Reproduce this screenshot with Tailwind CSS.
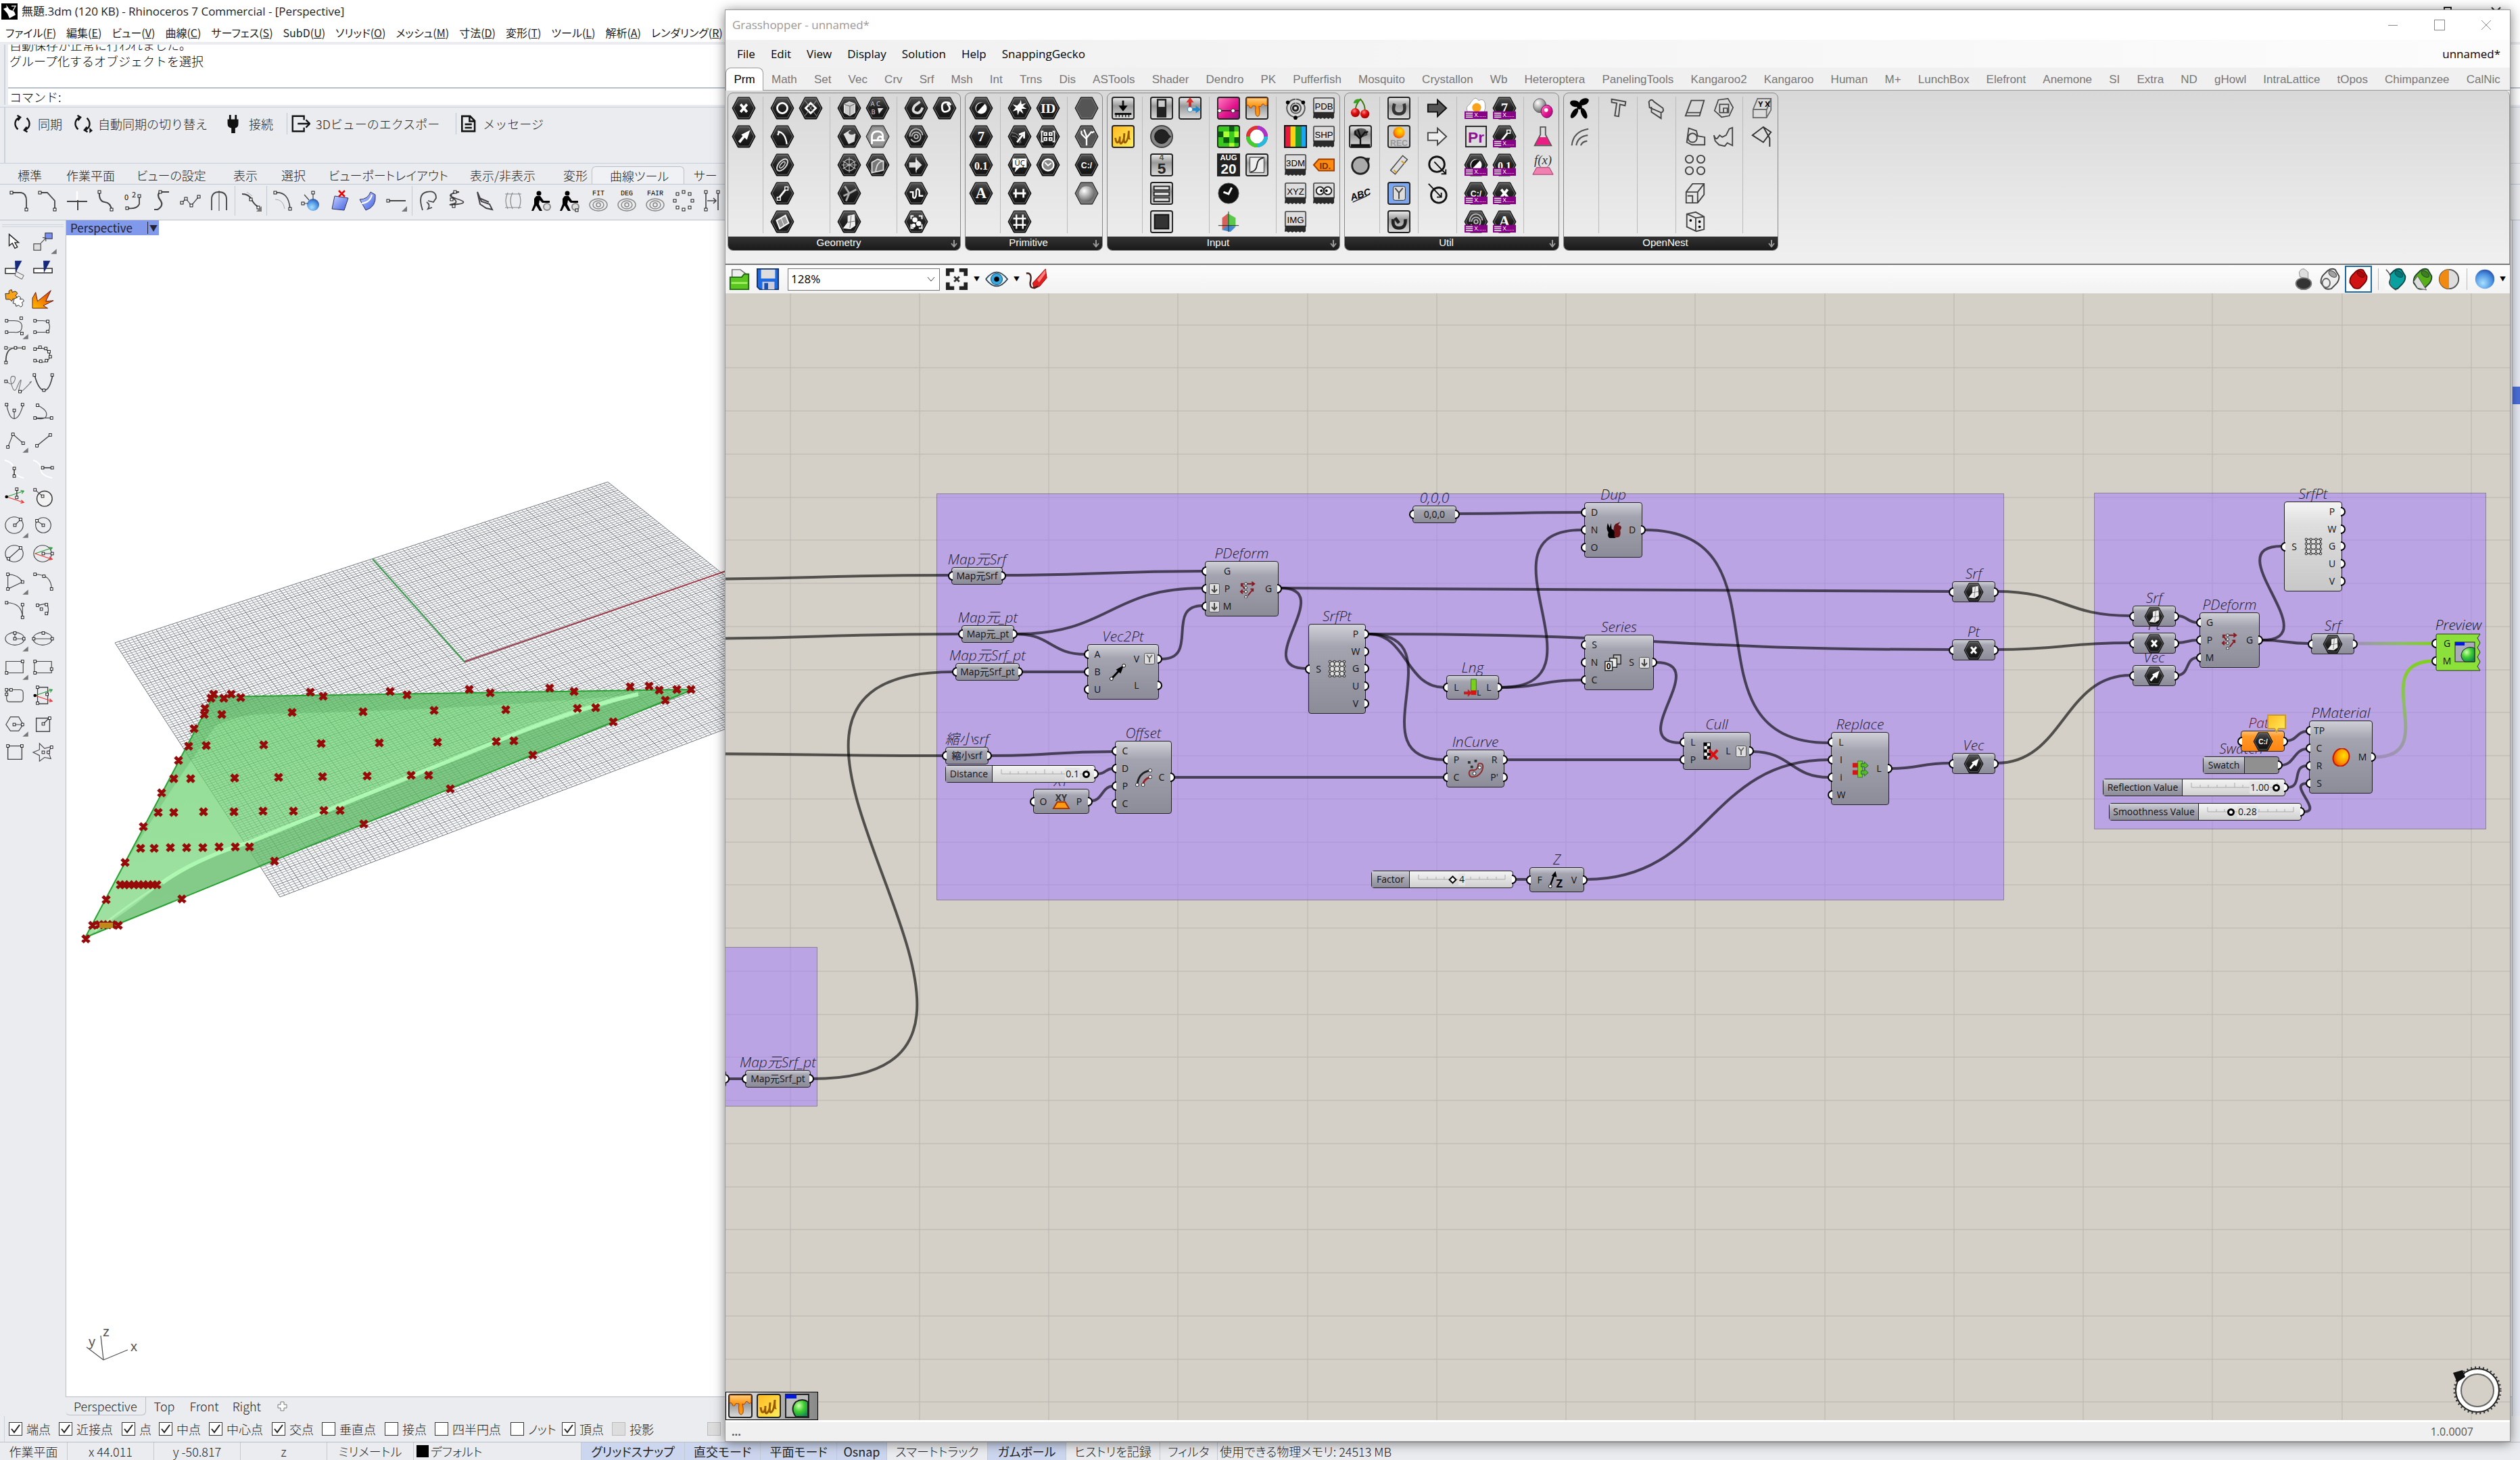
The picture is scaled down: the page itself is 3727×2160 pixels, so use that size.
<!DOCTYPE html>
<html lang="ja">
<head>
  <meta charset="UTF-8">
  <meta name="viewport" content="width=device-width, initial-scale=1.0">
  <title>Rhinoceros 7 - Grasshopper</title>
  <script src="https://cdn.jsdelivr.net/npm/@tailwindcss/browser@4"></script>
</head>
<body class="h-screen overflow-hidden bg-[#ebecef] font-['Noto_Sans_CJK_JP',sans-serif] text-[#222]">

  <!-- shared gradients -->
  <svg class="absolute w-0 h-0" aria-hidden="true">
    <defs>
      <linearGradient id="gHex" x1="0" y1="0" x2="0" y2="1"><stop offset="0" stop-color="#555"/><stop offset=".45" stop-color="#222"/><stop offset="1" stop-color="#111"/></linearGradient>
      <linearGradient id="gTile" x1="0" y1="0" x2="0" y2="1"><stop offset="0" stop-color="#eee"/><stop offset=".4" stop-color="#999"/><stop offset="1" stop-color="#ddd"/></linearGradient>
      <linearGradient id="gPink" x1="0" y1="0" x2="1" y2="1"><stop offset="0" stop-color="#ff80c0"/><stop offset=".6" stop-color="#e0108a"/><stop offset="1" stop-color="#901080"/></linearGradient>
      <linearGradient id="gOrange" x1="0" y1="0" x2="0" y2="1"><stop offset="0" stop-color="#ffd080"/><stop offset=".5" stop-color="#ff8a00"/><stop offset="1" stop-color="#f5a020"/></linearGradient>
      <linearGradient id="gYellow" x1="0" y1="0" x2="1" y2="1"><stop offset="0" stop-color="#ffb820"/><stop offset="1" stop-color="#fff060"/></linearGradient>
      <radialGradient id="gBall" cx=".35" cy=".3" r=".8"><stop offset="0" stop-color="#fff"/><stop offset=".6" stop-color="#999"/><stop offset="1" stop-color="#555"/></radialGradient>
      <radialGradient id="gBlue" cx=".4" cy=".7" r=".8"><stop offset="0" stop-color="#a8e0ff"/><stop offset=".6" stop-color="#4a90e0"/><stop offset="1" stop-color="#1c3c9c"/></radialGradient>
      <radialGradient id="gGreen" cx=".4" cy=".35" r=".7"><stop offset="0" stop-color="#d0ffb0"/><stop offset=".5" stop-color="#40d030"/><stop offset="1" stop-color="#108a50"/></radialGradient>
      <radialGradient id="gFire" cx=".6" cy=".35" r=".8"><stop offset="0" stop-color="#ffe000"/><stop offset=".5" stop-color="#ff9a00"/><stop offset="1" stop-color="#e02000"/></radialGradient>
      <radialGradient id="gRed" cx=".4" cy=".3" r=".8"><stop offset="0" stop-color="#ff8080"/><stop offset=".4" stop-color="#e01010"/><stop offset="1" stop-color="#800"/></radialGradient>
      <linearGradient id="gBurst" x1="0" y1="1" x2="1" y2="0"><stop offset="0" stop-color="#ffc000"/><stop offset="1" stop-color="#e03000"/></linearGradient>
      <linearGradient id="gSheet" x1="0" y1="0" x2="1" y2="1"><stop offset="0" stop-color="#c8d4ff"/><stop offset="1" stop-color="#4060e0"/></linearGradient>
    </defs>
  </svg>

  <!-- Rhino main window -->
  <div class="flex flex-col h-screen">
    <header class="bg-white shrink-0">
      <div class="flex items-center justify-between h-[34px] pl-[2px] pr-[28px]">
        <div class="flex items-center gap-[6px]">
          <svg class="w-[24px] h-[24px]" viewBox="0 0 24 24"><rect width="24" height="24" fill="#000"/><path d="M3 8L8 6L7 2L12 9L19 12L21 17L12 22L9 15Z" fill="#fff"/><path d="M15 4h6l-4 7" stroke="#ddd" stroke-width="1.500" fill="none"/></svg>
          <h1 class="text-[17px] leading-[24px] font-['Open_Sans','Noto_Sans_CJK_JP',sans-serif]">無題.3dm (120 KB) - Rhinoceros 7 Commercial - [Perspective]</h1>
        </div>
        <div class="flex gap-[58px]">
          <svg class="w-[15px] h-[15px]" viewBox="0 0 15 15" fill="none" stroke="#222" stroke-width="2"><path d="M1 5h9v9H1zM4 5V1h10v9h-4"/></svg>
          <svg class="w-[15px] h-[15px]" viewBox="0 0 15 15" fill="none" stroke="#222" stroke-width="2"><path d="M1 1L14 14M14 1L1 14"/></svg>
        </div>
      </div>
      <nav id="rhino-menu" class="flex items-center gap-[15px] h-[28px] pl-[8px] text-[16px] leading-[20px] whitespace-nowrap [font-feature-settings:'palt']"></nav>
    </header>

    <section class="shrink-0 mt-[4px] ml-[6px] pl-[4px] border-l-2 border-[#cdd3dc] text-[18px] leading-[24px] text-black font-light">
      <div class="flex flex-col justify-end h-[65px] bg-white overflow-hidden pl-[2px] pb-[27px] border-b-2 border-[#b8c0cc]">
        <p>自動保存が正常に行われました。</p>
        <p>グループ化するオブジェクトを選択</p>
      </div>
      <label class="flex items-center h-[24px] bg-white pl-[2px]">コマンド:<input type="text" class="flex-1 outline-none"></label>
    </section>

    <section class="shrink-0 mt-[3px] border-t border-[#c8cfdb] h-[83px]">
      <div class="flex items-start h-full ml-[6px] border-l-2 border-[#cdd3dc] pl-[10px] pt-[8px]">
        <div id="sync-bar" class="flex items-center h-[32px] text-[18px] leading-[24px] font-light"></div>
      </div>
    </section>

    <section class="shrink-0 border-t border-[#c8cfdb] h-[84px] pt-[4px]">
      <div id="rhino-tabs" class="flex items-end h-[27px] pl-[12px] border-b border-[#c0c8d4] text-[18px] leading-[26px] font-light whitespace-nowrap"></div>
      <div id="curve-tools" class="flex items-center h-[48px] pl-[9px]"></div>
    </section>

    <main class="flex flex-1 min-h-0 border-t border-[#b9c0c8]">
      <aside class="w-[97px] shrink-0 pt-[6px]">
        <div class="mx-[3px] h-[4px] border-y border-[#cdd3dc]"></div>
        <div id="toolbox" class="grid grid-cols-[42px_42px] auto-rows-[42px] pl-[1px]"></div>
      </aside>
      <div class="flex flex-col flex-1 min-w-0">
        <div class="relative flex-1 min-h-0 bg-white border-l border-b border-[#b9c0c8] overflow-hidden">
          <svg id="viewport" class="absolute left-0 top-0 w-[980px] h-[1740px]" viewBox="98 326 980 1740"></svg>
          <button class="absolute left-0 top-0 flex items-center h-[22px] w-[137px] pl-[6px] bg-[#8199ea] text-[17px] leading-[22px] text-[#223]">
            <span class="flex-1 text-left">Perspective</span><span class="border-l border-[#223] text-[12px] leading-[18px] w-[17px]">▼</span>
          </button>
        </div>
        <div class="flex items-start h-[28px] text-[18px] leading-[26px] font-light">
          <button class="px-[12px] h-[27px] border-b border-r border-[#b9c0c8] rounded-b-md">Perspective</button>
          <button class="px-[12px]">Top</button>
          <button class="px-[10px]">Front</button>
          <button class="px-[10px]">Right</button>
          <button class="px-[14px] h-[27px]" aria-label="add view"><svg class="w-[15px] h-[15px]" viewBox="0 0 15 15"><path d="M5 1h5v4h4v5h-4v4H5v-4H1V5h4z" fill="#fff" stroke="#777"/></svg></button>
        </div>
      </div>
      <aside class="w-[12px] shrink-0 bg-[#e6e9f2] border-l border-[#b9c0c8] pt-[246px]"><div class="h-[26px] bg-[#4b6fd8]"></div></aside>
    </main>

    <form id="osnap" class="flex items-center shrink-0 h-[38px] ml-[6px] pl-[6px] border-l border-[#cdd3dc] text-[18px] leading-[24px] font-light whitespace-nowrap"></form>

    <footer class="flex shrink-0 h-[27px] border-t border-[#b9c0c8] text-[18px] leading-[26px] font-light text-center whitespace-nowrap [font-feature-settings:'palt']">
      <div class="w-[100px] border-r border-[#c4cad4]">作業平面</div>
      <div class="w-[128px] border-r border-[#c4cad4]">x 44.011</div>
      <div class="w-[128px] border-r border-[#c4cad4]">y -50.817</div>
      <div class="w-[128px] border-r border-[#c4cad4]">z</div>
      <div class="w-[128px] border-r border-[#c4cad4]">ミリメートル</div>
      <div class="w-[248px] flex items-center gap-[3px] pl-[4px] border-r border-[#c4cad4]"><span class="w-[18px] h-[18px] bg-black"></span>デフォルト</div>
      <button class="w-[153px] border-r border-[#c4cad4] bg-[#ccd6ee] font-normal">グリッドスナップ</button>
      <button class="w-[112px] border-r border-[#c4cad4] bg-[#ccd6ee] font-normal">直交モード</button>
      <button class="w-[113px] border-r border-[#c4cad4] bg-[#ccd6ee] font-normal">平面モード</button>
      <button class="w-[74px] border-r border-[#c4cad4] bg-[#ccd6ee] font-normal">Osnap</button>
      <button class="w-[149px] border-r border-[#c4cad4]">スマートトラック</button>
      <button class="w-[116px] border-r border-[#c4cad4] bg-[#ccd6ee] font-normal">ガムボール</button>
      <button class="w-[139px] border-r border-[#c4cad4]">ヒストリを記録</button>
      <button class="w-[85px] border-r border-[#c4cad4]">フィルタ</button>
      <div class="pl-[3px]">使用できる物理メモリ: 24513 MB</div>
    </footer>
  </div>

  <!-- Grasshopper window -->
  <div class="absolute left-[1072px] right-[14px] top-[14px] bottom-[27px] flex flex-col bg-[#f0f0f0] border border-[#999] shadow-[0_2px_16px_rgba(0,0,0,0.5)] font-['Open_Sans','Noto_Sans_CJK_JP',sans-serif]">
    <div class="flex items-center justify-between shrink-0 h-[44px] bg-white pl-[10px] pr-[27px]">
      <h2 class="text-[17px] leading-[24px] text-[#999]">Grasshopper - unnamed*</h2>
      <div class="flex gap-[53px] text-[#888]">
        <button aria-label="minimize"><svg class="w-[16px] h-[16px]" viewBox="0 0 16 16" stroke="currentColor" fill="none"><path d="M1 8.500h14"/></svg></button>
        <button aria-label="maximize"><svg class="w-[16px] h-[16px]" viewBox="0 0 16 16" stroke="currentColor" fill="none"><rect x=".5" y=".5" width="15" height="15"/></svg></button>
        <button aria-label="close"><svg class="w-[16px] h-[16px]" viewBox="0 0 16 16" stroke="currentColor" fill="none"><path d="M1 1L15 15M15 1L1 15"/></svg></button>
      </div>
    </div>
    <div class="flex items-center justify-between shrink-0 h-[41px] bg-linear-to-r from-[#f0f0f0] to-[#fcfcfc] pl-[17px] pr-[14px] text-[17px] leading-[24px] text-black">
      <nav id="gh-menu" class="flex gap-[23px]"></nav>
      <span>unnamed*</span>
    </div>
    <div class="flex items-end shrink-0 h-[34px] border-b border-[#999] pr-[14px] text-[17px] leading-[30px] font-['Liberation_Sans',sans-serif] text-[#777]">
      <button class="w-[56px] h-[34px] -mb-px bg-white border border-[#999] border-b-0 rounded-t-lg text-black">Prm</button>
      <div id="gh-tabs" class="flex flex-1 justify-between pl-[12px]"></div>
    </div>
    <div id="ribbon" class="flex items-start gap-[6px] shrink-0 h-[256px] pl-[3px] pt-[3px] bg-linear-to-b from-[#d8d8d8] to-[#f0f0f0] border-r border-[#999] rounded-tr-lg"></div>
    <div class="flex items-center shrink-0 h-[44px] border-t-2 border-[#777] bg-linear-to-b from-[#fcfcfc] to-[#f2f2f2] pl-[4px] pr-[6px]">
      <div id="gh-left" class="flex items-center gap-[8px]"></div>
      <div id="gh-right" class="flex items-center gap-[5px] ml-auto"></div>
    </div>
    <div id="canvas" class="relative flex-1 min-h-0 overflow-hidden bg-[#d4d0c8] text-[#111]"></div>
    <div class="flex items-center justify-between shrink-0 h-[31px] border-t-3 border-white bg-[#f0f0f0] pl-[9px] pr-[54px] text-[16px] leading-[18px] text-[#555]">
      <span class="font-bold">...</span><span>1.0.0007</span>
    </div>
  </div>

  <script>
    const $ = (id) => document.getElementById(id);

    // ---------- Rhino menus ----------
    const rhinoMenu = [['ファイル','F'],['編集','E'],['ビュー','V'],['曲線','C'],['サーフェス','S'],['SubD','U'],['ソリッド','O'],['メッシュ','M'],['寸法','D'],['変形','T'],['ツール','L'],['解析','A'],['レンダリング','R']];
    $('rhino-menu').innerHTML = rhinoMenu.map(([t, k]) => `<button>${t}(<u>${k}</u>)</button>`).join('');

    const sync = '<path d="M9 25C2 18 4 9 12 6M8 3l5 3-4 5M23 7c7 7 5 16-3 19M24 29l-5-3 4-5" fill="none" stroke="#111" stroke-width="2.500"/>';
    const syncBar = [
      [sync, '同期', 'w-[89px]'],
      [sync + '<path d="M27 22v9l5-4z" fill="#111"/>', '自動同期の切り替え', 'w-[223px]'],
      ['<path d="M11 2v8M20 2v8" stroke="#111" stroke-width="3"/><path d="M7 9h17v7q0 6-5 7v8h-6v-8q-6-1-6-7z" fill="#111"/>', '接続', 'w-[94px]'],
      ['<path d="M22 10V4H4v24h18v-6M12 16h19M25 10l6 6-6 6" fill="none" stroke="#111" stroke-width="2.500"/>', '3Dビューのエクスポー', 'w-[250px]'],
      ['<path d="M5 3h14l8 8v18H5zM18 3v9h9M10 17h12M10 23h12" fill="none" stroke="#111" stroke-width="3"/>', 'メッセージ', 'w-[130px]'],
    ];
    $('sync-bar').innerHTML = syncBar.map(([s, t, w], i) => `<button class="flex items-center gap-[8px] h-full whitespace-nowrap ${w} ${i > 2 ? 'border-l border-[#c0c4cc] pl-[4px]' : ''}"><svg class="w-[30px] h-[30px]" viewBox="0 0 32 32">${s}</svg>${t}</button>`).join('');

    const tabs = [['標準', 'w-[72px]'], ['作業平面', 'w-[104px]'], ['ビューの設定', 'w-[143px]'], ['表示', 'w-[71px]'], ['選択', 'w-[70px]'], ['ビューポートレイアウト', 'w-[209px]'], ['表示/非表示', 'w-[138px]'], ['変形', 'w-[56px]'], ['曲線ツール', 'w-[137px]'], ['サー', 'w-[60px]']];
    $('rhino-tabs').innerHTML = tabs.map(([t, w], i) => `<button class="text-left ${w} ${i === 8 ? 'h-[26px] bg-[#f0f1f4] border border-b-0 border-[#b9c0c8] rounded-t-md pl-[26px]' : 'pl-[14px]'} [font-feature-settings:'palt']">${t}</button>`).join('');

    // ---------- Rhino tool icons (32 unit box, k = curve with control squares) ----------
    const sq = (x, y) => `<rect x="${x - 2}" y="${y - 2}" width="4" height="4" fill="#fff" stroke="#111"/>`;
    const k = (d, pts = '', w = 1.2, c = '#444') => `<path d="${d}" fill="none" stroke="${c}" stroke-width="${w}"/>` + (pts ? pts.split(' ').map(p => sq(...p.split(',').map(Number))).join('') : '');
    const spiral = (t) => `<text x="16" y="8" font-size="10" text-anchor="middle" font-family="Liberation Mono">${t}</text><g fill="none" stroke="#888" stroke-width="1.500"><circle cx="16" cy="22" r="3"/><ellipse cx="16" cy="22" rx="8" ry="6"/><ellipse cx="16" cy="22" rx="13" ry="9"/></g>`;
    const runner = '<circle cx="12" cy="5" r="3.500"/><path d="M8 9l6 0 5 7 9 0v3H17l-4-4-1 6 5 10h-4l-5-8-4 8H1l4-10 0-8z"/><circle cx="24" cy="25" r="5" fill="#ddd" stroke="#888" stroke-width="2"/>';
    const curveTools = [
      k('M3 4h14q8 1 8 12v13', '3,4 25,29', 1.8), k('M3 4h11l11 12v13', '3,4 25,29', 1.8), k('M16 2v28', '', 2.5, '#fff') + k('M1 17h30M17 15v15', '', 2),
      k('M7 3q-1 14 8 15t10 12', '7,3 25,29', 2), k('M24 9v12q-4 8-18 6', '24,9 6,27', 1.8) + '<text x="2" y="15" font-size="11">0</text><text x="13" y="11" font-size="11">2</text>',
      k('M26 3H13q-6 4 0 12t-4 14H4', '13,3', 2.2), k('M3 19l6-6 8 10 11-13', '3,19 9,13 17,23 28,10'), k('M5 30V14q0-11 11-11t11 11v16', '', 1.8) + k('M16 1v30', '', 1), '|',
      k('M3 6q10 0 14 8t10 11', '16,14 27,26', 1.8) + k('M10 3l8 6', '', 1, '#aaa') + '<path d="M32 24v8h-8z" fill="#777"/>', '|',
      k('M5 4q20-2 22 24', '5,4 27,28', 1.6) + k('M5 14q12 0 14 14', '', 1, '#aaa'),
      '<circle cx="19" cy="22" r="9" fill="url(#gBlue)"/>' + k('M19 14V3M12 20H3M13 15L6 7', '19,4 4,20'),
      '<path d="M9 9l20 3-6 18-18-2z" fill="url(#gSheet)" stroke="#336"/>' + k('M15 1l9 9M24 1l-9 9', '', 2.5, '#e00'),
      '<path d="M4 14q12 0 16-11l7 4q2 18-14 23z" fill="url(#gSheet)" stroke="#336"/>' + k('M7 20q13-2 15-13', '', 2, '#fff'),
      k('M4 16h26', '4,16', 2) + '<path d="M32 24v8h-8z" fill="#777"/>', '|',
      k('M8 30Q0 6 14 3t14 9l-4 6-8-2M14 18q6 4 2 10l6-2', '', 1.8), k('M14 3q-10 4-2 10t-2 8 8 0-2-8 4-10z', '14,3 9,14 12,24', 1.8),
      k('M5 3l6 14 12 4 4 8-9-2-9-6zM8 12l14 6', '', 2), k('M4 6h24M8 4q-6 12 0 24M15 4q-6 12 0 24M24 4q6 12 0 24M4 26h24', '', 1.2, '#888'),
      runner, runner + sq(26, 30), spiral('FIT'), spiral('DEG'), spiral('FAIR'),
      [[16, 3], [25, 6], [29, 16], [25, 26], [16, 29], [7, 26], [3, 16], [7, 6]].map(p => sq(...p)).join(''), k('M7 2v28M25 2v28M9 16h13M18 12l4 4-4 4', '7,3 7,29 25,3', 1.6),
    ];
    $('curve-tools').innerHTML = curveTools.map(s => s === '|' ? '<div class="w-px h-[44px] bg-[#c4c8d0] mx-[2px]"></div>' : `<button class="w-[42px] shrink-0 flex justify-center"><svg class="w-[32px] h-[32px] overflow-visible" viewBox="0 0 32 32">${s}</svg></button>`).join('');

    const m = '<path d="M38 29v8h-9z" fill="#777"/>'; // flyout corner
    const arrows = k('M4 17l27-9M26 7l5 1-3 4', '', 1.3, '#2a9a3a') + k('M4 17l27 9M27 22l4 4-5 1', '', 1.3, '#e33');
    const toolbox = [
      '<path d="M8 6v18l5-4 4 8 4-2-4-7h6z" fill="#fff" stroke="#222" stroke-width="1.500"/>',
      '<rect x="20" y="4" width="11" height="9" fill="#7a90f0" stroke="#222"/><rect x="2" y="21" width="11" height="10" fill="#ddd" stroke="#222"/>' + k('M13 20l8-8M16 11l5 1v5') + m,
      '<rect x="2" y="15" width="17" height="8" fill="#fff" stroke="#222" stroke-width="1.500"/><path d="M17 3h11L18 22z" fill="#14287c"/><path d="M19 20l12 6-3 6-11-6z" fill="#eee" stroke="#555"/>',
      '<rect x="2" y="15" width="29" height="7" fill="#fff" stroke="#222" stroke-width="1.500"/><path d="M17 3h11L18 22z" fill="#14287c"/>',
      '<path d="M2 10l6 0q-2-6 4-6l1 4q6-4 8 2l-3 3q4 2 0 7l-4-2-2 4-3-3-6 0z" fill="#f7a21b" stroke="#222"/><path d="M16 18l5-2q1-4 5 0l-1 3q6-2 6 3l-3 2q3 5-2 7l-3-3-4 2-1-4-4-1z" fill="#fff" stroke="#222"/>',
      '<path d="M0 33V17L5 8l3 14L29 5 21 22l12-1-16 8 7 4z" fill="url(#gBurst)" stroke="#511"/>',
      k('M4 8h12q13 0 12 10t-12 8H4', '4,8 4,26 27,4 28,28') + m, k('M4 8h12q11 0 11 9t-8 9H4', '4,8 4,26 24,9 24,25'),
      k('M3 29Q2 6 18 6h13', '', 1.8) + k('M3 6h28', '3,6 18,6 31,6 3,29', 1, '#999'), k('M4 8q10-4 18 1t4 14-22 3', '4,8 12,5 21,7 26,12 28,20 22,26 13,27 4,26'),
      k('M4 14q8 8 12 0t-2-8-2 14 8 4 6-12-2 12 10 0 6-8', '3,14 25,30', 1.2, '#777'), k('M3 3q6 24 15 25T32 3', '3,4 18,28 31,4', 1.8),
      k('M4 6q4 22 12 22T30 6M16 28V15', '4,6 29,6 16,15'), k('M8 7q16 8 14 16t-18 4h26', '8,7 4,27 30,27'),
      k('M6 28L14 8l16 14', '6,28 14,8 30,22') + m, k('M7 26L28 9', '7,26 28,9', 1.6),
      k('M1 4q14 4 14 14t16 14', '', 2, '#fff') + k('M16 17v12', '16,17 16,29', 1.8), k('M1 4q12 4 12 14t18 14', '', 2, '#fff') + k('M16 16h15', '16,16 31,16', 1.8),
      arrows + '<circle cx="4" cy="17" r="2.500"/>' + k('M20 5v13', '20,5 20,18', 1.6), '<circle cx="19" cy="20" r="12" fill="#f2f2f2" stroke="#333" stroke-width="1.500"/>' + k('M4 6l12 10', '4,6 16,16'),
      k('M2 17a14 13 0 1 0 28 0a14 13 0 1 0-28 0M17 17l9-9', '17,17 26,8') + m, k('M5 17a12 12 0 1 0 24 0a12 12 0 1 0-24 0M7 10l10 7', '7,10 17,17'),
      k('M2 17a14 13 0 1 0 28 0a14 13 0 1 0-28 0M7 25L26 8', '7,25 26,8'), k('M2 17a14 13 0 1 0 28 0a14 13 0 1 0-28 0M17 17h14', '17,17 31,17') + arrows,
      k('M6 5q16 0 23 12L6 28z', '6,5 6,28 29,17') + m, k('M4 5q26 0 26 23', '4,5 18,8 30,28'),
      k('M4 5q24 0 25 23V8', '4,5 29,8 29,28'), k('M8 10q14-6 16 0t0 12', '8,9 22,8 14,15 22,22'),
      k('M2 17a15 10 0 1 0 30 0a15 10 0 1 0-30 0M17 9v8h14', '17,8 17,17 31,17') + m, k('M1 17a15 10 0 1 0 30 0a15 10 0 1 0-30 0M2 17h29', '2,17 17,8 31,17'),
      k('M3 8h27v18H3z', '29,8 4,26') + m, k('M3 8h27v18H3z', '4,8 4,26 30,20'),
      k('M9 8h16q5 0 5 5v9q0 5-5 5H9q-5 0-5-5v-9q0-5 5-5', '4,8 11,8 4,15'), k('M8 4h16v26H8z', '8,4 8,29 23,15', 1.4) + arrows + '<circle cx="4" cy="17" r="2.500"/>',
      k('M10 6h13l7 12-7 10H10L3 18zM16 18h12', '16,18 29,18') + m, k('M6 8h21v21H6zM17 17l9-9', '17,17 27,8', 1.5),
      k('M6 7h22v21H6z', '6,7 28,7', 1.5), k('M1 17l10-4V3l8 8 11-3-5 9 4 10-10-2-8 6v-9z', '30,9 17,17 25,17'),
    ];
    $('toolbox').innerHTML = toolbox.map(s => `<button class="flex items-center justify-center"><svg class="w-[32px] h-[32px] overflow-visible" viewBox="0 0 34 34">${s}</svg></button>`).join('');

    // ---------- Perspective viewport ----------
    const L = [170, 951], T = [899, 713], R = [1265, 1006], B = [414, 1327];
    const mix = (a, b, t) => [a[0] + (b[0] - a[0]) * t, a[1] + (b[1] - a[1]) * t];
    let minor = '', major = '';
    for (let i = 0; i <= 120; i++) {
      const t = i / 120;
      const seg = `M${mix(L, T, t)}L${mix(B, R, t)}M${mix(L, B, t)}L${mix(T, R, t)}`;
      if (i % 5) minor += seg; else major += seg;
    }
    const marks = [[316,1027],[342,1027],[312,1033],[331,1033],[356,1032],[459,1024],[478,1030],[577,1023],[602,1028],[694,1020],[725,1025],[813,1018],[849,1023],[932,1016],[960,1015],[975,1021],[1001,1020],[1022,1020],[984,1036],
      [303,1048],[302,1057],[328,1057],[432,1054],[537,1053],[642,1051],[748,1050],[854,1048],[881,1047],[907,1068],[287,1078],[279,1104],[305,1103],[390,1102],[475,1100],[561,1099],[647,1098],[734,1097],[760,1096],[788,1117],
      [264,1125],[257,1152],[282,1152],[347,1151],[412,1150],[477,1149],[543,1148],[608,1147],[634,1147],[666,1167],[239,1173],[234,1202],[257,1202],[301,1201],[346,1201],[389,1200],[434,1200],[479,1199],[503,1199],[538,1219],
      [212,1223],[208,1255],[228,1255],[252,1254],[276,1254],[300,1254],[324,1253],[348,1253],[369,1253],[406,1274],[185,1276],[178,1309],[184,1309],[191,1309],[198,1309],[205,1309],[212,1309],[219,1309],[226,1309],[232,1309],
      [269,1330],[157,1331],[137,1369],[147,1368],[153,1368],[159,1368],[166,1368],[175,1369],[127,1389]];
    $('viewport').innerHTML = `
      <defs><linearGradient id="gSurf" x1="0" y1="0" x2=".3" y2="1"><stop offset="0" stop-color="#4fae5c"/><stop offset=".2" stop-color="#62d069"/><stop offset="1" stop-color="#7ad47c"/></linearGradient></defs>
      <path d="${minor}" stroke="#9599a1" stroke-width="1" fill="none"/>
      <path d="${major}" stroke="#70767f" stroke-width="1" fill="none"/>
      <path d="M551 827L687 979" stroke="#3a9a4a" stroke-width="2"/><path d="M687 979L1073 845" stroke="#a03a48" stroke-width="2"/>
      <path d="M315 1031L1025 1020L126 1387Z" fill="url(#gSurf)" fill-opacity=".7"/>
      <path d="M126 1387Q190 1350 237 1308T369 1246L737 1096L944 1027L1025 1020Z" fill="#3c8a48" fill-opacity=".25"/>
      <path d="M315 1031L126 1387Q200 1240 318 1075Q335 1058 400 1056Q700 1050 944 1027L1025 1020Z" fill="#3c8a48" fill-opacity=".2"/>
      <path d="M240 1306Q290 1270 369 1246L737 1096Q860 1045 944 1027" stroke="#b4ffb8" stroke-width="6" stroke-opacity=".85" fill="none"/>
      <path d="M140 1378Q180 1345 240 1306" stroke="#b4ffb8" stroke-width="3" stroke-opacity=".6" fill="none"/>
      <path d="M315 1031L1025 1020L126 1387Z" fill="none" stroke="#28a032" stroke-width="2"/>
      <path d="${marks.map(([x, y]) => `M${x - 5} ${y - 5}l10 10m0-10l-10 10`).join('')}" stroke="#960a0a" stroke-width="5" fill="none"/>
      <path d="M147 1369h20" stroke="#c08a18" stroke-width="8"/>
      <path d="M153 2012L149 1976M153 2012L189 1997M153 2012L128 1993" stroke="#555" stroke-width="1.300"/>
      <g font-size="20" fill="#555" font-family="Liberation Sans"><text x="152" y="1977">z</text><text x="131" y="1992">y</text><text x="193" y="1999">x</text></g>`;

    // ---------- Osnap ----------
    const snaps = [['端点', 1, 'w-[74px]'], ['近接点', 1, 'w-[93px]'], ['点', 1, 'w-[55px]'], ['中点', 1, 'w-[74px]'], ['中心点', 1, 'w-[93px]'], ['交点', 1, 'w-[74px]'], ['垂直点', 0, 'w-[93px]'], ['接点', 0, 'w-[74px]'], ['四半円点', 0, 'w-[112px]'], ['ノット', 0, 'w-[76px]'], ['頂点', 1, 'w-[74px]'], ['投影', 2, 'w-[141px]'], ['', 2, 'w-[24px]']];
    $('osnap').innerHTML = snaps.map(([t, on, w]) => `<label class="relative flex items-center shrink-0 gap-[6px] [font-feature-settings:'palt'] ${w}"><input type="checkbox" ${on === 1 ? 'checked' : ''} ${on === 2 ? 'disabled' : ''} class="peer appearance-none w-[20px] h-[20px] border border-[#333] bg-white disabled:bg-[#ddd] disabled:border-[#bbb]"><svg class="absolute left-[2px] w-[16px] h-[16px] hidden peer-checked:block" viewBox="0 0 16 16"><path d="M2 8l4 5 8-11" fill="none" stroke="#222" stroke-width="2"/></svg>${t}</label>`).join('');

    // ---------- Grasshopper menus ----------
    $('gh-menu').innerHTML = ['File', 'Edit', 'View', 'Display', 'Solution', 'Help', 'SnappingGecko'].map(t => `<button>${t}</button>`).join('');
    $('gh-tabs').innerHTML = ['Math', 'Set', 'Vec', 'Crv', 'Srf', 'Msh', 'Int', 'Trns', 'Dis', 'ASTools', 'Shader', 'Dendro', 'PK', 'Pufferfish', 'Mosquito', 'Crystallon', 'Wb', 'Heteroptera', 'PanelingTools', 'Kangaroo2', 'Kangaroo', 'Human', 'M+', 'LunchBox', 'Elefront', 'Anemone', 'SI', 'Extra', 'ND', 'gHowl', 'IntraLattice', 'tOpos', 'Chimpanzee', 'CalNic'].map(t => `<button>${t}</button>`).join('');

    // ---------- Ribbon icons (36 unit box) ----------
    const hex = (s, f = 'url(#gHex)') => `<polygon points="0,18 9,1 27,1 36,18 27,35 9,35" fill="${f}" stroke="#000"/><polygon points="2,18 10,3 26,3 34,18 26,33 10,33" fill="none" stroke="#777"/>${s}`;
    const ln = (d, w = 2.5, c = '#fff', f = 'none') => `<path d="${d}" fill="${f}" stroke="${c}" stroke-width="${w}"/>`;
    const tx = (t, s = 18, c = '#fff', y = 25, f = 'Liberation Serif') => `<text x="18" y="${y}" font-size="${s}" font-weight="bold" text-anchor="middle" fill="${c}" font-family="${f}">${t}</text>`;
    const tile = (s, f = 'url(#gTile)') => `<rect x="1" y="1" width="34" height="34" rx="3" fill="${f}" stroke="#222" stroke-width="2"/>${s}`;
    const chip = (t) => `<rect x="2" y="2" width="32" height="24" rx="2" fill="#ddd" stroke="#555" stroke-width="2"/><path d="M2 24h32v9l-3 2-3-2-3 2-3-2-3 2-3-2-3 2-3-2-3 2-3-2-3 1z" fill="#2a2a2a"/><text x="18" y="20" font-size="14" text-anchor="middle" font-family="Liberation Sans">${t}</text>`;
    const xm = (s) => s + '<rect x="0" y="23" width="36" height="12" fill="#860086"/><path d="M2 26h11M2 29h11M2 32h11" stroke="#fff" stroke-width="1.500"/><text x="15" y="32" font-size="9" fill="#fff" font-family="Liberation Sans">X.....</text>';
    const arrow = ln('M11 27L19 17', 4) + '<path d="M14 15l14-7-5 15z" fill="#fff"/>';
    const cross = ln('M13 12L23 24M23 12L13 24', 4);
    const srf = '<path d="M9 28L16 19 16 9 26 7 27 24 20 29z" fill="#eee" stroke="#fff"/>' + ln('M16 19l11-2M21 8l-2 20', 1, '#666');
    const swirl = '<g fill="none" stroke="#bbb" stroke-width="2"><circle cx="18" cy="18" r="3"/><path d="M11 18a7 7 0 0 1 14 0a8 8 0 0 1-15 4"/><path d="M8 18a10 11 0 0 1 20-2"/></g>';
    const tree = (c) => ln('M18 32V18M18 22l-8-8M18 20l8-10M18 18L14 7M10 14V9M26 12l4-2', 2.5, c);
    const I = {
      pt: hex(cross), vec: hex(arrow), circ: hex('<circle cx="18" cy="18" r="8" fill="none" stroke="#fff" stroke-width="3"/>'), quad: hex(ln('M18 10L26 18L18 26L10 18z', 3) + ln('M9 6l18 24M27 6L9 30', 1, '#aaa')),
      arc: hex(ln('M11 10q12 2 14 20M13 10L11 16')), ell: hex('<ellipse cx="18" cy="18" rx="11" ry="6" transform="rotate(-50 18 18)" fill="none" stroke="#ddd" stroke-width="2"/><ellipse cx="18" cy="18" rx="6" ry="2.500" transform="rotate(-50 18 18)" fill="none" stroke="#ddd" stroke-width="1.500"/>'),
      line: hex(ln('M12 26L24 11', 3) + ln('M10 24h5v5h-5zM22 8h5v5h-5z', 1.5, '#fff', '#222')), plane: hex(ln('M9 16l14-8 5 12-14 9z', 2, '#fff', '#999') + ln('M16 12l5 13', 1)),
      box: hex('<path d="M10 12l8-4 9 3v14l-8 5-9-5z" fill="#ccc" stroke="#fff"/>' + ln('M10 12l9 3 8-4M19 15v15', 1.2, '#666')), abc: hex('<text x="7" y="15" font-size="10" fill="#ddd">A C</text><text x="8" y="28" font-size="10" fill="#ddd">B</text><path d="M18 18h9l-7 9z" fill="#ddd"/>'),
      brep: hex('<path d="M9 14l10-6 9 6-2 12-9 4z" fill="#ddd"/><ellipse cx="22" cy="12" rx="5" ry="3" fill="#444"/>'), q: hex(ln('M9 30V19q0-9 9-9t8 9v5M9 24h20M18 24a4 6 0 1 1 8 0', 3), '#999'),
      mesh: hex('<circle cx="18" cy="18" r="9" fill="none" stroke="#aaa" stroke-width="1.500"/>' + ln('M18 6v24M8 12l20 12M28 12L8 24M6 18h24', 1.3, '#bbb')), srfm: hex(ln('M9 14l9-5 9 3v14l-7 2-11 2zM15 28q2-16 12-16', 2, '#ddd', '#777')),
      tri: hex(ln('M18 18L11 7M18 18l11-6M18 18l-5 12M18 18l-9 4', 3, '#aaa')), srf: hex(srf),
      mag: hex(ln('M24 8l-8 6q-6 8 1 11t11-8', 4, '#ddd')), sub: hex(ln('M26 10q-12-4-12 6t8 7 0-12M24 9l4 4', 3)), spi: hex(swirl), mir: hex('<path d="M7 14h10V8l10 10-10 10v-6H7z" fill="#ddd"/>' + ln('M18 6v24', 1)),
      loop: hex(ln('M8 16h5v8q4 4 5-4v-6q2-6 5 0v8h6')), grp: hex(ln('M10 14v-5h4M22 9h5v5M10 22v6h4M22 28h5v-6', 2) + '<circle cx="16" cy="15" r="4" fill="#fff"/><circle cx="22" cy="21" r="4" fill="#fff"/><circle cx="14" cy="24" r="3" fill="#fff"/>'),
      bool: hex('<circle cx="18" cy="18" r="9" fill="#fff"/><path d="M12 24A9 9 0 0 1 24 11z" fill="#111"/>'), n7: hex(tx('7', 22)), n01: hex(tx('0.1', 17)), A: hex(tx('A', 24)),
      splat: hex('<path d="M18 10l2-5 1 7 7-2-5 5 6 4-8 0 3 8-6-5-3 7-1-8-7 2 5-6-5-5 7 2z" fill="#fff"/>'), dom: hex(ln('M6 12q12 0 14 16M6 17q10 0 12 12', 1, '#999') + ln('M14 27l9-12M17 15l8-3v9', 3)), uc: hex('<path d="M7 8h22v14H18l-8 8 2-8H7z" fill="#fff"/><text x="10" y="19" font-size="12">ÜÇ</text>'),
      hh: hex(ln('M12 11v14M24 11v14M8 18h20', 3)), grid: hex(ln('M13 7v22M23 7v22M8 13h20M8 23h20', 2.5)), id: hex(tx('ID', 21)), mat: hex(ln('M11 10H8v16h3M25 10h3v16h-3', 2) + ln('M12 12h4v4h-4zM20 12h4v4h-4zM12 20h4v4h-4zM20 20h4v4h-4z', 2)), clk: hex('<circle cx="18" cy="18" r="9" fill="#888" stroke="#fff" stroke-width="2.500"/>' + ln('M13 14l5 5 5-4', 2)),
      gray: hex('', '#555'), treeh: hex(tree('#fff'), '#555'), cs: hex(tx('C:/', 13, '#fff', 23, 'Liberation Sans')), ball: hex('<circle cx="18" cy="19" r="12" fill="url(#gBall)"/>', '#777'),
      btn: tile(ln('M18 6v10', 3, '#111') + '<path d="M11 14h14l-7 9z"/>' + ln('M5 27h26', 3, '#111') + ln('M7 28v4M12 28v4M17 28v4M22 28v4M27 28v4', 1.5, '#111')), pan: tile(ln('M6 20q1 9 4 7t3-9q-1 14 3 10t4-15q-2 17 2 14t5-18q-1 14 2 12', 3, '#9a5a00'), 'url(#gYellow)'),
      tog: tile('<rect x="11" y="4" width="14" height="28" fill="#222" stroke="#111"/><rect x="13" y="6" width="10" height="10" fill="#ccc"/>'), knob: '<circle cx="18" cy="18" r="17" fill="#888" stroke="#444" stroke-width="2"/><circle cx="18" cy="18" r="11" fill="#222" stroke="#111"/><path d="M26 12l7 6-7 6z" fill="#222"/>',
      dig: tile(tx('4', 13, '#555', 11, 'Liberation Sans') + tx('5', 24, '#222', 32, 'Liberation Sans')), list: tile('<path d="M6 7h24v6H6zM6 16h24v6H6zM6 25h24v6H6z" fill="#ddd" stroke="#222" stroke-width="2"/>'), scr: tile('<rect x="7" y="7" width="22" height="22" fill="#333" stroke="#111" stroke-width="2"/>', '#ddd'),
      move: tile(ln('M18 20V6', 4, '#c22') + '<path d="M12 9l6-8 6 8z" fill="#d33"/>' + ln('M18 20h10', 4, '#28c') + '<path d="M27 14l8 6-8 6z" fill="#28c"/><circle cx="18" cy="20" r="4" fill="#fff" stroke="#28c"/>'),
      pink: tile(ln('M1 22h34', 1.5, '#222') + '<circle cx="4" cy="22" r="3" fill="#fff" stroke="#222"/><circle cx="25" cy="22" r="3" fill="#fff" stroke="#222"/>', 'url(#gPink)'), grn: tile('<path d="M2 10h8v9H2zM19 2h8v8h-8zM10 19h9v9h-9zM27 19h7v9h-7z" fill="#0a5a10"/><path d="M10 10h9v9h-9zM27 10h7v9h-7zM19 28h8v6h-8z" fill="#b0ff30"/>', '#3ac820'),
      cal: '<rect width="36" height="36" fill="#222"/>' + tx('AUG', 12, '#fff', 11, 'Liberation Sans') + tx('20', 22, '#fff', 32, 'Liberation Sans'), clock: '<circle cx="18" cy="18" r="16" fill="#111" stroke="#555"/>' + ln('M10 16l8 3 5-10', 3), cube: '<path d="M8 12l9-7v20l-9 6z" fill="#d8605a"/><path d="M17 5l12 7v14l-12-3z" fill="#5ac84a"/><path d="M8 31l9-8 12 3-8 8z" fill="#48c"/>' + ln('M2 24h32M18 2v32', 1, '#222'),
      drip: tile('<path d="M2 2h32v11q-3 3-5-1-3-2-4 2-1 3-4 1 2 8 1 13-3 6-6 0-1-8 0-13-6-2-6 2-3 3-4-2-2-3-4-1z" fill="url(#gOrange)" stroke="#a04000"/>'), wheel: '<circle cx="18" cy="18" r="14" fill="#fff" stroke="#d33" stroke-width="6"/><path d="M18 4A14 14 0 0 1 32 18" fill="none" stroke="#a3c" stroke-width="6"/><path d="M32 18A14 14 0 0 1 18 32" fill="none" stroke="#2bd" stroke-width="6"/><path d="M18 32A14 14 0 0 1 4 18" fill="none" stroke="#4c3" stroke-width="6"/>',
      graph: tile('<rect x="7" y="6" width="22" height="24" fill="#eee" stroke="#222"/>' + ln('M8 29q9-1 10-11t10-11', 2, '#222')), atom: ln('M18 4a14 14 0 1 0 1 0M18 10a8 8 0 1 0 1 0', 2, '#555') + '<circle cx="18" cy="18" r="4" fill="none" stroke="#222" stroke-width="3"/><circle cx="6" cy="9" r="3"/><circle cx="30" cy="9" r="3"/><circle cx="18" cy="33" r="3"/>',
      col: '<rect width="36" height="36" fill="#111"/><path d="M2 2h8v32H2z" fill="#e8183c"/><path d="M10 2h8v32h-8z" fill="#ffd010"/><path d="M18 2h9v32h-9z" fill="#1e9a2a"/><path d="M27 2h7v32h-7z" fill="#18a8f0"/>', dm: chip('3DM'), xyz: chip('XYZ'), img: chip('IMG'), pdb: chip('PDB'), shp: chip('SHP'), eyes: chip('') + '<g fill="#fff" stroke="#222" stroke-width="2"><circle cx="12" cy="14" r="6"/><circle cx="24" cy="14" r="6"/></g><circle cx="14" cy="14" r="2"/><circle cx="22" cy="14" r="2"/>',
      idt: '<path d="M2 18l8-9h24v18H10z" fill="#ff8a10" stroke="#a04000" stroke-width="2"/><text x="11" y="24" font-size="14" font-weight="bold" fill="#803000" font-family="Liberation Sans">ID.</text>',
      cherry: ln('M10 24Q10 12 18 4q8 8 7 20', 2, '#3a7a10') + '<path d="M17 4q-8-2-10 6 8 2 10-6" fill="#3aa020"/><circle cx="10" cy="25" r="7" fill="url(#gRed)"/><circle cx="25" cy="27" r="7" fill="url(#gRed)"/>', treet: tile('<path d="M8 16q-2-10 10-11t11 11l-11 4z" fill="#222" fill-opacity=".7"/>' + tree('#111') + ln('M3 32h30', 4, '#111')), lens: '<circle cx="18" cy="19" r="13" fill="#aaa" stroke="#222" stroke-width="3"/><path d="M23 7h10l-3 10z" fill="#222"/>', abcs: `<text x="2" y="25" font-size="15" font-weight="bold" font-style="italic" transform="rotate(-18 18 20)" font-family="Liberation Sans">ABC</text>` + ln('M6 32l22-10', 1.5, '#222'),
      ring: tile(ln('M11 11q-5 16 7 16t8-16', 5, '#333')), rec: tile(tx('REC', 13, '#999', 33, 'Liberation Sans') + '<circle cx="18" cy="12" r="9" fill="url(#gFire)"/>', '#ccc'), eraser: ln('M8 30L28 6', 11, '#444') + ln('M9 29L27 7', 8, '#ddd') + ln('M10 26l4 4M22 12l5 4', 2, '#d90'), zip: tile('<rect x="9" y="7" width="19" height="22" rx="3" fill="#ddd" stroke="#222"/>' + ln('M12 10l6 7 6-7M18 17v10', 2, '#444'), '#7ba6f0'), power: tile(ln('M9 14q-2 14 9 14t10-14M18 20l-6-8', 5, '#222')),
      ar1: '<path d="M3 12h15V5l14 13-14 13v-7H3z" fill="#555" stroke="#111" stroke-width="2"/>', ar2: '<path d="M3 12h15V5l14 13-14 13v-7H3z" fill="#eee" stroke="#444" stroke-width="2"/>', q1: '<circle cx="17" cy="17" r="12" fill="none" stroke="#111" stroke-width="3"/>' + ln('M13 13l18 19M31 25v7h-7', 2, '#111'), q2: '<circle cx="20" cy="21" r="12" fill="none" stroke="#111" stroke-width="3"/>' + ln('M4 3l20 21M24 17v7h-7', 2, '#111'),
      egg: xm('<path d="M8 12q2-4 6-8t8 2q8-4 10 4t-2 16H6Q0 16 8 12" fill="#fff" stroke="#999"/><circle cx="19" cy="17" r="7" fill="#f9a21b"/>'), pr: '<rect x="2" y="2" width="32" height="32" fill="#ddd" stroke="#222" stroke-width="2"/>' + tx('Pr', 24, '#8a1090', 28, 'Liberation Sans'),
      peb: '<ellipse cx="13" cy="14" rx="10" ry="11" fill="url(#gBall)" stroke="#555"/><ellipse cx="24" cy="23" rx="9" ry="10" fill="url(#gPink)" stroke="#606"/><circle cx="23" cy="21" r="3" fill="#fff"/>', flask: '<path d="M14 3h8v12l9 17H5l9-17z" fill="#ddd" stroke="#555" stroke-width="2"/><path d="M12 19h12l6 12H6z" fill="#e81e82"/>', fx: '<text x="18" y="17" font-size="20" font-style="italic" text-anchor="middle" fill="#333" font-family="Liberation Serif">f(x)</text><path d="M8 22h20l6 11H2z" fill="#f080b0" stroke="#a03060"/>',
      fan: '<g fill="#000"><ellipse cx="11" cy="11" rx="8" ry="5" transform="rotate(15 11 11)"/><ellipse cx="25" cy="8" rx="8" ry="5" transform="rotate(-25 25 8)"/><ellipse cx="10" cy="26" rx="9" ry="4" transform="rotate(-55 10 26)"/><ellipse cx="25" cy="26" rx="9" ry="4" transform="rotate(65 25 26)"/><circle cx="18" cy="16" r="4"/></g>', wifi: ln('M6 32Q8 10 32 6M13 32q2-14 18-16M20 32q2-6 10-7', 2.2, '#555'), T: ln('M8 4l22 4-1 6-8-2-2 19-6-1 3-20-8-1z', 2, '#444'), roll: ln('M6 8q4-6 8 0l14 10q2 6-3 7L7 17zM25 25v9L10 24v-8', 2, '#444'), par: ln('M12 6h20l-7 24H3zM6 25h20', 2, '#444'), hexs: ln('M10 5l15-2 8 14-6 13-12 2L4 22zM12 12h14v13H12zM18 18h6v7h-6z', 1.8, '#444'),
      shapes: ln('M8 5l12 4 2 8 11 2v12H13l-8-4z', 2, '#444') + '<circle cx="14" cy="20" r="7" fill="none" stroke="#444" stroke-width="2"/>', rhino: ln('M3 16q3 8 6 4l3-4 4 3 6-3 5-10 5-2v28l-8-4-4 5-9-2-6-6z', 2, '#444'), four: '<g fill="none" stroke="#444" stroke-width="2"><circle cx="9" cy="9" r="6"/><circle cx="27" cy="9" r="6"/><circle cx="9" cy="27" r="6"/><circle cx="27" cy="27" r="6"/></g>', boxd: ln('M4 16L14 3h18v17L22 33H4zM4 16h18v17M22 16L32 3M6 22h8v10', 2, '#444'), dice: ln('M5 6l14-3 13 7v20l-12 3L5 26zM5 6l14 6 13-2M19 12v20', 2, '#444') + '<circle cx="11" cy="16" r="2"/><circle cx="25" cy="18" r="2"/><circle cx="25" cy="26" r="2"/>',
      yx: ln('M11 3h21l-7 18v12H4V20zM4 20h21M25 33l7-12V3', 1.8, '#666') + '<text x="12" y="16" font-size="12" font-weight="bold">Y X</text>', sign: ln('M3 16L20 3l12 8-12 16zM20 3l10 18v13', 2, '#333'),
    };
    const X = (key) => xm(I[key]);
    Object.assign(I, { x7: X('n7'), xl: X('line'), xb: X('bool'), x01: X('n01'), xc: X('cs'), xp: X('pt'), xs: X('spi'), xA: X('A') });

    // panel -> groups (separated by a rule) -> columns of icons
    const panels = [
      ['Geometry', [['pt vec'], ['circ arc ell line plane', 'quad'], ['box brep mesh tri srf', 'abc q srfm'], ['mag spi mir loop grp', 'sub']]],
      ['Primitive', [['bool n7 n01 A'], ['splat dom uc hh grid', 'id mat clk'], ['gray treeh cs ball']]],
      ['Input', [['btn pan'], ['tog knob dig list scr', 'move'], ['pink grn cal clock cube', 'drip wheel graph'], ['atom col dm xyz img', 'pdb shp idt eyes']]],
      ['Util', [['cherry treet lens abcs'], ['ring rec eraser zip power'], ['ar1 ar2 q1 q2'], ['egg pr xb xc xs', 'x7 xl x01 xp xA'], ['peb flask fx']]],
      ['OpenNest', [['fan wifi'], ['T'], ['roll'], ['par shapes four boxd dice', 'hexs rhino'], ['yx sign']]],
    ];
    $('ribbon').innerHTML = panels.map(([name, groups]) => `
      <section class="flex flex-col h-[234px] border border-[#888] rounded-lg overflow-hidden">
        <div class="flex flex-1 py-[5px] px-[5px]">
          ${groups.map(cols => `<div class="flex gap-[6px] px-[10px] first:pl-0 last:pr-0 border-r border-[#bbb] last:border-r-0">${cols.map(c => `<div class="flex flex-col gap-[8px]">${c.split(' ').map(id => `<button class="w-[36px] h-[34px]"><svg class="w-[36px] h-[34px]" viewBox="0 0 36 36">${I[id]}</svg></button>`).join('')}</div>`).join('')}</div>`).join('')}
        </div>
        <div class="relative h-[20px] pr-[16px] bg-linear-to-b from-[#333] to-[#1a1a1a] text-white text-center text-[15px] leading-[18px] font-['Liberation_Sans',sans-serif]">${name}<svg class="absolute right-[3px] top-[4px] w-[11px] h-[12px]" viewBox="0 0 11 12"><path d="M5 1v10M1 6l4 5 4-5" stroke="#999" stroke-width="2" fill="none"/></svg></div>
      </section>`).join('');

    // ---------- Canvas toolbar ----------
    const ic = (s) => `<button class="w-[34px] h-[36px]"><svg class="w-[34px] h-[36px]" viewBox="0 0 36 36">${s}</svg></button>`;
    const drop = '<span class="w-[9px] text-[9px] leading-[12px] text-black">▼</span>';
    const rule = '<span class="w-px h-[32px] mx-[4px] bg-[#bbb]"></span>';
    $('gh-left').innerHTML =
      ic('<path d="M6 16V3h13l9 7v6z" fill="#eee" stroke="#666" stroke-width="1.500"/><path d="M3 15h18l4-5h7v24H3z" fill="#5ac420" stroke="#1e6a10" stroke-width="2"/><path d="M5 24h25" stroke="#a0f060" stroke-width="3"/>') +
      ic('<path d="M1 2h33v32H5l-4-4z" fill="#1e6ae0" stroke="#103070" stroke-width="2"/><rect x="7" y="3" width="22" height="14" fill="#ddd"/><rect x="9" y="22" width="19" height="12" fill="#ccd"/><rect x="12" y="24" width="6" height="10" fill="#1450b0"/>') +
      `<label class="relative flex items-center w-[225px] h-[33px] ml-[4px]"><select aria-label="zoom" class="appearance-none w-full h-full pl-[4px] bg-white border border-[#777] text-[17px] leading-[20px] text-black"><option>128%</option></select><svg class="absolute right-[7px] w-[12px] h-[8px]" viewBox="0 0 12 8"><path d="M1 1l5 6 5-6" fill="none" stroke="#444"/></svg></label>` +
      ic(ln('M4 13V4h10M22 4h10v9M32 23v9H22M14 32H4v-9', 6, '#222') + ln('M14 14l8 8M22 14l-8 8', 3, '#333')) + drop +
      ic('<path d="M1 18Q18-4 35 18Q18 40 1 18" fill="#e8f4fa" stroke="#345" stroke-width="2"/><circle cx="18" cy="18" r="9" fill="#38a8e0" stroke="#146"/><circle cx="18" cy="18" r="4"/>') + drop +
      ic('<path d="M12 24L32 2l2 14-11 13-9 4z" fill="#e02020" stroke="#900"/><path d="M19 19L32 3l0 6-10 14z" fill="#ff8080"/>' + ln('M2 9q10-2 6 15 0 12 12 5', 2.5, '#422'));
    const gem = (c, s) => `<path d="M14 5Q20 0 26 3L32 13Q33 20 27 26L20 33Q12 35 9 31L4 24Q3 16 8 11z" fill="${c}" stroke="${s}" stroke-width="2"/><ellipse cx="22" cy="10" rx="7" ry="4" transform="rotate(35 22 10)" fill="${s}" fill-opacity=".45" stroke="${s}"/>`;
    $('gh-right').innerHTML =
      ic('<path d="M12 14L11 7q3-6 8-5l6 5v12z" fill="#ddd" stroke="#888"/><ellipse cx="18" cy="25" rx="12" ry="9" fill="#333" stroke="#777" stroke-width="2"/>') + ic(gem('#eee', '#444') + '<ellipse cx="12" cy="24" rx="6" ry="7" fill="none" stroke="#666" stroke-width="2"/>') +
      `<button class="w-[40px] h-[40px] flex items-center justify-center border-2 border-[#1a6aa0] bg-white"><svg class="w-[32px] h-[34px]" viewBox="0 0 36 36">${gem('#d01414', '#700')}</svg></button>${rule}` +
      ic(gem('#0aa0a0', '#044') + '<path d="M2 3q10 10 6 17t8 15H0z" fill="#f8f8f8"/>' + ln('M2 3q10 10 6 17t10 15', 1.5, '#444')) + ic(gem('#58b018', '#243') + '<path d="M4 22l6-9 14 22-14-3z" fill="#ddd" stroke="#555"/>') + ic('<circle cx="18" cy="18" r="15" fill="#ddd" stroke="#555" stroke-width="2"/><path d="M18 3a15 15 0 0 0 0 30z" fill="#f08a10"/>') + rule +
      ic('<circle cx="18" cy="18" r="15" fill="url(#gBlue)"/>') + drop;

    // ---------- Canvas ----------
    // node data is kept in window coordinates; the canvas starts at OX, OY
    const OX = 1073, OY = 434;
    let lines = '';
    for (let i = 0; i < 15; i++) lines += `M${Math.round(1168.5 + i * 191.25)} 434V2110`;
    for (let i = 0; i < 27; i++) lines += `M1073 ${Math.round(480.5 + i * 63.75)}H3720`;

    const wires = [[1000,857,1404,851],[1000,945,1419,938],[1000,1115,1395,1118],[1000,1596,1099,1596],[1201,1596,1410,994],[1486,851,1779,845],[1503,938,1779,870],[1503,938,1605,968],[1511,994,1605,994],[1718,975,1779,896],[1894,870,1932,989],[1894,870,2884,875],[1465,1118,1646,1112],[1624,1145,1646,1137],[1614,1185,1646,1163],[1737,1150,2136,1150],
      [2024,938,2136,1017],[2024,938,2136,1124],[2024,938,2884,961],[2156,760,2340,758],[2220,1017,2340,784],[2220,1017,2340,1006],[2449,980,2486,1099],[2228,1124,2486,1124],[2432,784,2705,1099],[2592,1112,2705,1150],[2241,1301,2259,1301],[2347,1301,2705,1124],[2796,1137,2884,1129],
      [2953,875,3151,911],[2953,961,3151,951],[2953,1129,3151,999],[3220,911,3250,921],[3220,951,3250,947],[3220,999,3250,973],[3345,947,3375,808],[3345,947,3415,952],[3382,1096,3412,1082],[3374,1132,3412,1108],[3383,1165,3412,1133],[3407,1201,3412,1159]];
    const bez = ([a, b, c, d]) => { const t = Math.max(Math.abs(c - a) / 2, Math.abs(d - b) * 0.72); return `M${a} ${b}C${a + t} ${b} ${c - t} ${d} ${c} ${d}`; };

    const nIcon = {
      deform: '<g stroke="#8a1a20" stroke-width="2" fill="none"><path d="M9 14L4 6M4 10V6h4M13 6h11M20 3l4 3-4 3M12 18H3M6 15l-3 3 3 3M14 24l8-10M18 14h4v4"/></g>' + [[11, 6], [11, 12], [11, 18], [11, 26]].map(([x, y]) => `<circle cx="${x}" cy="${y}" r="2" fill="#fff" stroke="#222"/>`).join(''),
      arrow: '<path d="M5 24L18 10" stroke="#000" stroke-width="3"/><path d="M12 10l12-7-5 13z"/><circle cx="5" cy="24" r="2.500" fill="#fff" stroke="#000"/><circle cx="24" cy="4" r="2.500" fill="#fff" stroke="#000"/>',
      grid: '<rect x="3" y="3" width="22" height="22" fill="#ddd"/><path d="M3 3h22v22H3zM3 10h22M3 18h22M10 3v22M18 3v22" fill="none" stroke="#333" stroke-width="1.500"/>' + [3, 10, 18, 25].map(x => [3, 10, 18, 25].map(y => `<circle cx="${x}" cy="${y}" r="1.800" fill="#ccc" stroke="#222"/>`).join('')).join(''),
      offset: '<path d="M4 25Q6 6 24 3" stroke="#222" stroke-width="3" fill="none"/><path d="M13 25q1-9 11-12" stroke="#9a2020" stroke-width="3" fill="none"/>' + [[4, 25], [24, 3], [13, 25], [24, 13]].map(([x, y]) => `<circle cx="${x}" cy="${y}" r="2.500" fill="#fff" stroke="#222"/>`).join(''),
      xy: '<text x="14" y="13" font-size="14" font-weight="bold" text-anchor="middle" fill="#333">XY</text><path d="M8 15h12l6 10H2z" fill="#ff9a10" stroke="#a03000" stroke-width="2"/>',
      rabbit: '<path d="M14 12q0-8 6-9l4-2-3 5q8 2 3 8 2 10-4 11h-8z" fill="#6a1418"/><path d="M5 3l3 7 2-7 1 9q5 2 4 8t4 6H8q-4-2-2-9-4-5-1-14"/>',
      series: '<g fill="#eee" stroke="#222" stroke-width="1.500"><rect x="15" y="2" width="11" height="14" fill="#bbb"/><rect x="9" y="7" width="11" height="14"/><rect x="2" y="12" width="11" height="14"/></g><text x="4" y="24" font-size="12" font-weight="bold">0</text>',
      lng: '<rect x="11" y="1" width="8" height="20" fill="#7ad01a" stroke="#374"/><rect x="11" y="18" width="8" height="7" fill="#d01818"/><path d="M0 20h6v-4l6 6-6 6v-4H0z" fill="#d01818"/><text x="20" y="26" font-size="12">L</text>',
      incurve: '<path d="M18 6q8-2 7 6t-9 13q-11 4-12-3t6-6 8-10" fill="none" stroke="#8a2a2a" stroke-width="2"/><circle cx="20" cy="12" r="2.500" fill="#fff" stroke="#222"/><circle cx="12" cy="21" r="2.500" fill="#fff" stroke="#222"/><path d="M2 2h4v4H2zM12 0h4v4h-4zM6 9h4v4H6z" fill="#333"/>',
      cull: '<rect x="3" y="1" width="10" height="25" fill="#fff" stroke="#000"/><path d="M3 1h5v5H3zM8 6h5v5H8zM3 11h5v5H3zM8 16h5v5H8zM3 21h5v5H3z"/><path d="M11 12l13 14M24 12L11 26" stroke="#d81010" stroke-width="4"/>',
      replace: '<rect x="10" y="2" width="7" height="25" fill="#7ad01a" stroke="#374"/><path d="M2 5h8v7H2zM2 16h8v7H2z" fill="#d01818"/><path d="M15 6h5V3l6 6-6 5v-3h-5zM15 17h5v-3l6 6-6 5v-3h-5z" fill="#58b828" stroke="#263"/>',
      z: '<path d="M4 23L10 6" stroke="#000" stroke-width="2.500"/><path d="M6 8l6-7 2 9z"/><circle cx="4" cy="24" r="2.500" fill="#fff" stroke="#000"/><text x="13" y="26" font-size="17" font-weight="bold">Z</text>',
      egg: '<ellipse cx="14" cy="14" rx="12" ry="14" transform="rotate(25 14 14)" fill="url(#gFire)" stroke="#c01800" stroke-width="2"/>',
    };
    const badge = (c) => c === '>' ? '<svg class="w-[16px] h-[17px]" viewBox="0 0 16 17"><rect x=".5" y=".5" width="15" height="16" rx="2" fill="#ddd" stroke="#555"/><path d="M8 3v10M4 9l4 4 4-4" fill="none" stroke="#444" stroke-width="2"/></svg>'
      : c === '#' ? '<svg class="w-[16px] h-[17px]" viewBox="0 0 16 17"><rect x=".5" y=".5" width="15" height="16" rx="2" fill="#ddd" stroke="#555"/><path d="M4 3l4 5 4-5M8 8v6" fill="none" stroke="#666" stroke-width="2"/></svg>' : '<span class="w-[16px]"></span>';
    const gripL = '<span class="absolute -left-[6px] top-1/2 -mt-[7px] w-[7px] h-[14px] bg-white border-2 border-r-0 border-black rounded-l-full"></span>';
    const gripR = '<span class="absolute -right-[6px] top-1/2 -mt-[7px] w-[7px] h-[14px] bg-white border-2 border-l-0 border-black rounded-r-full"></span>';
    const title = (t, c = 'text-[#221c2c]') => `<span class="absolute bottom-full left-1/2 -translate-x-1/2 italic text-[21px] leading-[26px] font-light whitespace-nowrap ${c}">${t}</span>`;
    const at = (x, y, w, h) => `style="left:${x - OX}px;top:${y - OY}px;width:${w}px;height:${h}px"`;
    const skin = { grey: 'bg-linear-to-b from-[#d0d0d8] via-[#a4a4b0] via-25% to-[#8c8c99]', light: 'bg-linear-to-b from-[#f4f4f4] via-[#dedede] via-25% to-[#c8c8c8]', orange: 'bg-linear-to-b from-[#ffc070] via-[#ff9a28] via-25% to-[#ff8410]' };

    function node(x, y, w, h, name, ins, outs, icon, look = 'grey') {
      const col = (list, left) => {
        const wide = list.some(s => /[>#]/.test(s));
        return `<div class="flex flex-col h-full py-[1px]">${list.map(s => {
          const b = wide ? badge(s.slice(-1)) : '', t = `<span class="min-w-[18px] text-center">${s.replace(/[>#]/, '')}</span>`;
          return `<div class="relative flex flex-1 items-center gap-[2px] px-[5px]">${left ? gripL + b + t : t + b + gripR}</div>`;
        }).join('')}</div>`;
      };
      return `<div class="absolute flex items-center justify-between border border-[#222] rounded-sm text-[14px] leading-[18px] ${skin[look]}" ${at(x, y, w, h)}>${title(name)}${col(ins, true)}<svg class="w-[27px] h-[27px] shrink-0 -mx-[4px]" viewBox="0 0 28 28">${nIcon[icon]}</svg>${col(outs, false)}</div>`;
    }
    const param = (x, y, w, h, name, body, look = 'grey', tc) => `<div class="absolute border border-[#222] rounded-sm flex items-center justify-center text-[14px] leading-[18px] whitespace-nowrap ${skin[look]}" ${at(x, y, w, h)}>${title(name, tc)}${gripL}${I[body] ? `<svg class="w-[30px] h-[28px]" viewBox="0 0 36 36">${I[body]}</svg>` : body}${gripR}</div>`;

    function slider(x, y, w, label, lw, pct, text, side, shape) {
      const tw = w - lw, knob = 13 + pct / 100 * (tw - 26);
      const ticks = Array.from({ length: 11 }, (_, i) => `M${Math.round(13 + i * (tw - 26) / 10)} 12v${i % 5 ? -4 : -7}`).join('');
      const pos = side === 'left' ? `right:${Math.round(tw - knob + 9)}px` : `left:${Math.round(knob + 8)}px`;
      return `<div class="absolute flex border border-[#222] rounded-sm text-[14px] leading-[18px] bg-linear-to-b from-[#f4f4f4] to-[#cfcfcf]" ${at(x, y, w, 26)}>
        ${gripR}
        <label for="s-${label.split(' ')[0]}" class="flex items-center justify-center shrink-0 border-r border-[#222] whitespace-nowrap bg-linear-to-b from-[#d0d0d8] via-[#a4a4b0] to-[#8c8c99]" style="width:${lw}px">${label}</label>
        <div class="relative flex-1 min-w-0 flex items-center px-[7px]">
          <svg class="absolute left-0 top-0 w-full h-full"><path d="M13 12H${tw - 13}${ticks}" stroke="#aaa" fill="none"/></svg>
          <span class="absolute bg-[#e4e4e4] px-[1px]" style="${pos}">${text}</span>
          <input id="s-${label.split(' ')[0]}" type="range" min="0" max="100" value="${pct}" class="relative appearance-none w-full bg-transparent [&::-webkit-slider-thumb]:appearance-none [&::-webkit-slider-thumb]:bg-white [&::-webkit-slider-thumb]:border-black ${shape === 'diamond' ? '[&::-webkit-slider-thumb]:border-2 [&::-webkit-slider-thumb]:rotate-45 [&::-webkit-slider-thumb]:w-[9px] [&::-webkit-slider-thumb]:h-[9px]' : '[&::-webkit-slider-thumb]:border-3 [&::-webkit-slider-thumb]:rounded-full [&::-webkit-slider-thumb]:w-[11px] [&::-webkit-slider-thumb]:h-[11px]'}">
        </div></div>`;
    }

    $('canvas').innerHTML = `
      <svg class="absolute left-0 top-0 w-full h-full"><g transform="translate(-1073 -434)">
        <defs><linearGradient id="w1" gradientUnits="userSpaceOnUse" x1="3485" y1="0" x2="3600" y2="0"><stop offset="0" stop-color="#a090b8"/><stop offset=".6" stop-color="#8cc060"/><stop offset="1" stop-color="#80d020"/></linearGradient>
        <linearGradient id="w2" gradientUnits="userSpaceOnUse" x1="0" y1="1120" x2="0" y2="978"><stop offset="0" stop-color="#a090b8"/><stop offset=".6" stop-color="#8cc060"/><stop offset="1" stop-color="#80d020"/></linearGradient></defs>
        <path d="${lines}" stroke="#b9b5ae" fill="none"/>
        <g fill="#a078ff" fill-opacity=".5" stroke="#000" stroke-opacity=".3"><rect x="1385.500" y="730.500" width="1578" height="601"/><rect x="3097.500" y="729.500" width="579" height="497"/><rect x="1060.500" y="1401.500" width="148" height="235"/></g>
        <g fill="none" stroke="#000" stroke-opacity=".62" stroke-width="4">${wires.map(w => `<path d="${bez(w)}"/>`).join('')}</g>
        <path d="${bez([3485, 952, 3600, 952.1])}" fill="none" stroke="url(#w1)" stroke-width="5"/>
        <path d="${bez([3512, 1120, 3600, 978])}" fill="none" stroke="url(#w2)" stroke-width="5"/>
      </g></svg>` +
      param(1010, 1583, 64, 26, '', '') + param(1102, 1583, 97, 26, 'Map元Srf_pt', 'Map元Srf_pt') +
      param(1407, 839, 76, 26, 'Map元Srf', 'Map元Srf') + param(1422, 925, 78, 26, 'Map元_pt', 'Map元_pt') + param(1413, 981, 95, 26, 'Map元Srf_pt', 'Map元Srf_pt') + param(1398, 1105, 64, 26, '縮小srf', '縮小srf') +
      node(1528, 1167, 83, 37, 'XY', ['O'], ['P'], 'xy') + slider(1398, 1132, 222, 'Distance', 69, 100, '0.1', 'left') +
      node(1649, 1096, 84, 108, 'Offset', ['C', 'D', 'P', 'C'], ['C'], 'offset') + node(1608, 953, 106, 82, 'Vec2Pt', ['A', 'B', 'U'], ['V#', 'L'], 'arrow') +
      node(1782, 830, 109, 82, 'PDeform', ['G', 'P>', 'M>'], ['G'], 'deform') + node(1935, 923, 85, 133, 'SrfPt', ['S'], ['P', 'W', 'G', 'U', 'V'], 'grid') +
      param(2089, 748, 65, 26, '0,0,0', '0,0,0') + node(2343, 743, 86, 82, 'Dup', ['D', 'N', 'O'], ['D'], 'rabbit') + node(2343, 939, 103, 82, 'Series', ['S', 'N', 'C'], ['S>'], 'series') +
      node(2139, 999, 78, 36, 'Lng', ['L'], ['L'], 'lng') + node(2139, 1109, 86, 56, 'InCurve', ['P', 'C'], ['R', "P'"], 'incurve') + node(2489, 1083, 100, 56, 'Cull', ['L', 'P'], ['L#'], 'cull') +
      node(2708, 1083, 86, 108, 'Replace', ['L', 'I', 'i', 'W'], ['L'], 'replace') + slider(2028, 1288, 210, 'Factor', 56, 40, '4', 'right', 'diamond') + node(2262, 1283, 81, 37, 'Z', ['F'], ['V'], 'z') +
      param(2887, 860, 64, 31, 'Srf', 'srf') + param(2887, 946, 64, 31, 'Pt', 'pt') + param(2887, 1114, 64, 31, 'Vec', 'vec') +
      node(3378, 742, 86, 133, 'SrfPt', ['S'], ['P', 'W', 'G', 'U', 'V'], 'grid', 'light') +
      param(3154, 984, 64, 31, 'Vec', 'vec') + param(3154, 936, 64, 31, 'Pt', 'pt') + param(3154, 896, 64, 31, 'Srf', 'srf') +
      node(3253, 906, 89, 82, 'PDeform', ['G', 'P', 'M'], ['G'], 'deform') + param(3418, 937, 64, 31, 'Srf', 'srf') + node(3415, 1066, 94, 108, 'PMaterial', ['TP', 'C', 'R', 'S'], ['M'], 'egg') +
      `<div class="absolute flex border border-[#222] rounded-sm text-[14px] leading-[18px] bg-[#909090]" ${at(3258, 1119, 113, 26)}>${title('Swatch')}${gripR}<span class="flex items-center justify-center w-[61px] border-r border-[#222] bg-linear-to-b from-[#d0d0d8] via-[#a4a4b0] to-[#8c8c99]">Swatch</span></div>` +
      param(3314, 1081, 65, 31, 'Path', 'cs', 'orange', 'text-[#701020]') +
      `<svg class="absolute" ${at(3352, 1056, 30, 28)} viewBox="0 0 30 28"><path d="M2 2h26v20H18l-3 5-3-5H2z" fill="url(#gYellow)" stroke="#c89a30" stroke-width="2"/></svg>` +
      slider(3110, 1152, 270, 'Reflection Value', 117, 100, '1.00', 'left') + slider(3119, 1188, 285, 'Smoothness Value', 132, 28, '0.28', 'right') +
      `<div class="absolute text-[14px] leading-[18px]" ${at(3602, 937, 68, 56)}>${title('Preview', 'text-[#102010]')}
        <svg class="absolute left-0 top-0 w-[68px] h-[56px]" viewBox="0 0 68 56"><path d="M3 1H66l-4 6 4 7-4 7 4 7-4 7 4 7-4 7 4 6H3Q1 55 1 53V3Q1 1 3 1" fill="#8be03a" stroke="#263a10"/><rect x="29" y="13" width="29" height="29" fill="#aab" stroke="#222"/><rect x="29" y="13" width="14" height="5" fill="#0018e0"/><path d="M58 42H43q-9-8-2-17 8-7 17-3z" fill="url(#gGreen)" stroke="#222"/></svg>
        <div class="relative flex flex-col w-[34px] h-full py-[2px]"><div class="relative flex-1 flex items-center justify-center">${gripL}G</div><div class="relative flex-1 flex items-center justify-center">${gripL}M</div></div></div>` +
      `<div class="absolute left-0 bottom-0 flex items-center gap-[6px] w-[137px] h-[42px] pl-[3px] border border-black bg-linear-to-r from-[#eee] to-[#888]">
        ${[I.drip, I.pan, '<rect x="1" y="1" width="34" height="34" fill="#bbb" stroke="#222" stroke-width="2"/><rect x="1" y="1" width="16" height="6" fill="#0018e0"/><path d="M34 34H16q-9-12 0-22 10-6 18 0z" fill="url(#gGreen)" stroke="#222" stroke-width="2"/>'].map(s => `<button class="w-[36px] h-[36px]"><svg class="w-[36px] h-[36px]" viewBox="0 0 36 36">${s}</svg></button>`).join('')}
      </div>
      <svg class="absolute right-[8px] bottom-[4px] w-[80px] h-[80px]" viewBox="0 0 80 80"><circle cx="40" cy="40" r="28" fill="#d4d0c8" stroke="#fff" stroke-width="6"/><circle cx="40" cy="40" r="24" fill="none" stroke="#666" stroke-width="2"/><circle cx="40" cy="40" r="32" fill="none" stroke="#222" stroke-width="2"/><circle cx="40" cy="40" r="34" fill="none" stroke="#333" stroke-dasharray="2 4" stroke-width="3"/><path d="M4 14l14-4 4 10-12 8z" fill="#111"/></svg>`;
  </script>
</body>
</html>
